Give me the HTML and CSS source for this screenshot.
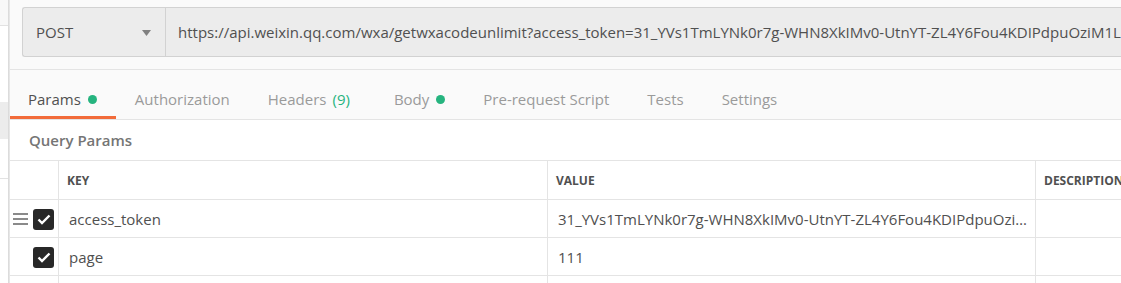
FILE: index.html
```html
<!DOCTYPE html>
<html>
<head>
<meta charset="utf-8">
<link rel="stylesheet" href="styles.css">
</head>
<body>
<div class="app">
  <aside class="sidebar">
    <div class="sb-top"></div>
    <div class="sb-gap"></div>
    <div class="sb-active"></div>
    <div class="sb-item"></div>
    <div class="sb-rest"></div>
  </aside>
  <div class="divider"></div>
  <main class="main">
    <div class="request-bar">
      <div class="url-group">
        <div class="method">
          <span>POST</span>
          <svg class="caret" width="9" height="6" viewBox="0 0 9 6"><path d="M0 0H9L4.5 6Z" fill="#808080"/></svg>
        </div>
        <div class="url">https://api.weixin.qq.com/wxa/getwxacodeunlimit?access_token=31_YVs1TmLYNk0r7g-WHN8XkIMv0-UtnYT-ZL4Y6Fou4KDIPdpuOziM1L8P9q</div>
      </div>
    </div>
    <nav class="tabs">
      <div class="tab active">Params <span class="dot"></span></div>
      <div class="tab">Authorization</div>
      <div class="tab">Headers <span class="count">(9)</span></div>
      <div class="tab">Body <span class="dot"></span></div>
      <div class="tab">Pre-request Script</div>
      <div class="tab">Tests</div>
      <div class="tab">Settings</div>
    </nav>
    <div class="section-title">Query Params</div>
    <div class="table">
      <div class="row head">
        <div class="cell ctl"></div>
        <div class="cell key">KEY</div>
        <div class="cell value">VALUE</div>
        <div class="cell desc">DESCRIPTION</div>
      </div>
      <div class="row">
        <div class="cell ctl">
          <span class="handle"><i></i><i></i><i></i></span>
          <span class="check"><svg width="14" height="11" viewBox="0 0 14 11"><path d="M1.5 5.5L5 9L12.5 1.5" fill="none" stroke="#fff" stroke-width="2.4"/></svg></span>
        </div>
        <div class="cell key txt">access_token</div>
        <div class="cell value txt"><span class="ellip">31_YVs1TmLYNk0r7g-WHN8XkIMv0-UtnYT-ZL4Y6Fou4KDIPdpuOziM1L8P9q</span></div>
        <div class="cell desc"></div>
      </div>
      <div class="row">
        <div class="cell ctl">
          <span class="check"><svg width="14" height="11" viewBox="0 0 14 11"><path d="M1.5 5.5L5 9L12.5 1.5" fill="none" stroke="#fff" stroke-width="2.4"/></svg></span>
        </div>
        <div class="cell key txt">page</div>
        <div class="cell value txt">111</div>
        <div class="cell desc"></div>
      </div>
      <div class="row">
        <div class="cell ctl"></div>
        <div class="cell key"></div>
        <div class="cell value"></div>
        <div class="cell desc"></div>
      </div>
    </div>
  </main>
</div>
</body>
</html>
```

FILE: styles.css
```css
* { box-sizing: border-box; }
html, body { margin: 0; padding: 0; }
body {
  width: 1121px;
  height: 283px;
  overflow: hidden;
  background: #fff;
  font-family: "Open Sans", "Noto Sans", sans-serif;
  color: #505050;
}
.app { display: flex; height: 283px; }

.sidebar { width: 8px; display: flex; flex-direction: column; flex: none; }
.sb-top { height: 26px; background: #f8f8f8; border-bottom: 1px solid #e2e2e2; }
.sb-gap { height: 76px; background: #fff; }
.sb-active { height: 37px; background: #ececec; }
.sb-item { height: 40px; background: #fff; border-bottom: 1px solid #e2e2e2; }
.sb-rest { flex: 1; background: #fff; }

.divider { width: 2px; flex: none; background: linear-gradient(to right, #d6d6d6, #ececec); }

.main { flex: 1; min-width: 0; overflow: hidden; display: flex; flex-direction: column; }

.request-bar {
  height: 70px;
  padding: 7px 0 0 12px;
  background: #fafafa;
  border-bottom: 1px solid #e4e4e4;
  flex: none;
}
.url-group {
  display: flex;
  height: 50px;
  border: 1px solid #d2d2d2;
  border-right: none;
  border-radius: 3px 0 0 3px;
  background: #ececec;
}
.method {
  width: 143px;
  flex: none;
  display: flex;
  align-items: center;
  justify-content: space-between;
  padding: 0 14px 0 13px;
  border-right: 1px solid #d2d2d2;
  font-size: 15px;
  color: #505050;
}
.caret { margin-top: 1px; }
.url {
  flex: 1;
  white-space: nowrap;
  overflow: hidden;
  display: flex;
  align-items: center;
  padding-left: 12px;
  font-size: 15px;
  color: #505050;
}

.tabs {
  height: 50px;
  flex: none;
  display: flex;
  align-items: flex-end;
  background: #fafafa;
  border-bottom: 1px solid #e4e4e4;
}
.tab {
  height: 40px;
  padding: 3px 19px 0;
  display: flex;
  align-items: center;
  gap: 6px;
  font-size: 15px;
  color: #9a9a9a;
  white-space: nowrap;
  border-bottom: 3px solid transparent;
}
.tab:first-child { padding-left: 18px; }
.tab.active { color: #505050; border-bottom-color: #f26b3a; }
.dot { width: 9px; height: 9px; border-radius: 50%; background: #26b47f; display: inline-block; margin-left: 1px; }
.count { color: #26b47f; margin-right: 6px; }

.section-title {
  height: 41px;
  flex: none;
  display: flex;
  align-items: center;
  padding-left: 19px;
  font-size: 15px;
  font-weight: 600;
  color: #757575;
  border-bottom: 1px solid #e4e4e4;
}

.table { display: flex; flex-direction: column; }
.row {
  display: grid;
  grid-template-columns: 49px 489px 488px 1fr;
  height: 38px;
  border-bottom: 1px solid #e4e4e4;
}
.row.head { height: 39px; }
.cell {
  display: flex;
  align-items: center;
  border-right: 1px solid #e4e4e4;
  padding-left: 8px;
  min-width: 0;
  white-space: nowrap;
  overflow: hidden;
}
.cell.desc { border-right: none; }
.head .cell { font-size: 12px; font-weight: 700; color: #505050; }
.cell.txt { font-size: 15px; color: #505050; padding-left: 10px; }
.ellip { overflow: hidden; text-overflow: ellipsis; display: block; max-width: 472px; }

.cell.ctl { padding-left: 0; position: relative; }
.handle {
  position: absolute;
  left: 3px;
  top: 13px;
  width: 15px;
  height: 12px;
  display: flex;
  flex-direction: column;
  justify-content: space-between;
}
.handle i { display: block; height: 2px; background: #8a8a8a; }
.check {
  position: absolute;
  left: 23px;
  top: 9px;
  width: 21px;
  height: 21px;
  border-radius: 3px;
  background: #282828;
  display: flex;
  align-items: center;
  justify-content: center;
}
```
